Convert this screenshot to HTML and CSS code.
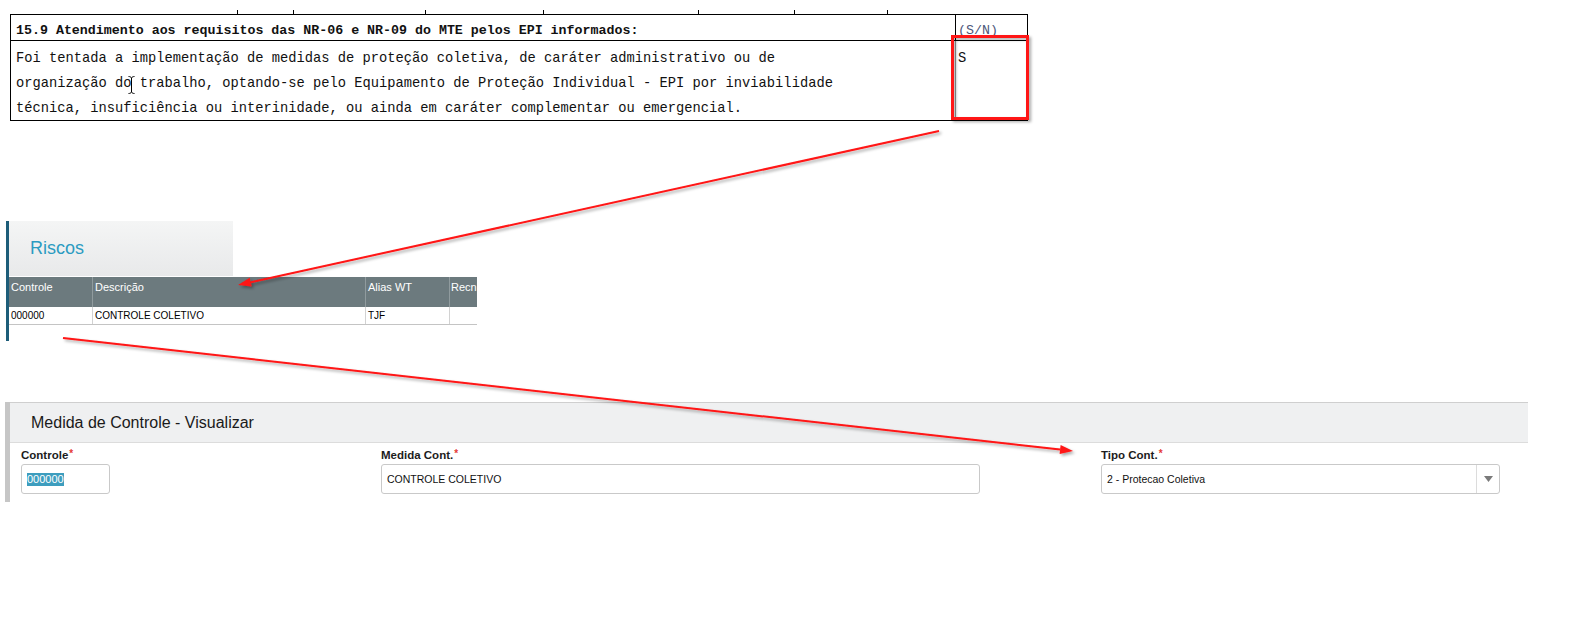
FILE: index.html
```html
<!DOCTYPE html>
<html lang="pt-BR">
<head>
<meta charset="UTF-8">
<title>Medida de Controle</title>
<link rel="stylesheet" href="styles.css">
</head>
<body>
  <div class="doc">
    <div class="ruler">
      <span style="width:228px"></span>
      <span style="width:56px"></span>
      <span style="width:132px"></span>
      <span style="width:118px"></span>
      <span style="width:155px"></span>
      <span style="width:96px"></span>
      <span style="width:93px"></span>
    </div>
    <div class="sheet">
      <div class="sheet-head">
        <div class="cell-text">15.9 Atendimento aos requisitos das NR-06 e NR-09 do MTE pelos EPI informados:</div>
        <div class="cell-sn sn-label">(S/N)</div>
      </div>
      <div class="sheet-body">
        <div class="cell-text">
          Foi tentada a implementação de medidas de proteção coletiva, de caráter administrativo ou de<br>
          organização do trabalho, optando-se pelo Equipamento de Proteção Individual - EPI por inviabilidade<br>
          técnica, insuficiência ou interinidade, ou ainda em caráter complementar ou emergencial.
        </div>
        <div class="cell-sn sn-value">S</div>
      </div>
    </div>
  </div>

  <div class="riscos">
    <div class="riscos-head">Riscos</div>
    <div class="grid">
      <div class="grid-head">
        <div class="col c1">Controle</div>
        <div class="col c2">Descrição</div>
        <div class="col c3">Alias WT</div>
        <div class="col c4">Recn</div>
      </div>
      <div class="grid-row">
        <div class="col c1">000000</div>
        <div class="col c2">CONTROLE COLETIVO</div>
        <div class="col c3">TJF</div>
        <div class="col c4"></div>
      </div>
    </div>
  </div>

  <div class="medida">
    <div class="medida-head">Medida de Controle - Visualizar</div>
    <div class="form">
      <div class="field">
        <label>Controle<span class="req">*</span></label>
        <div class="input input-code"><span class="selected">000000</span></div>
      </div>
      <div class="field">
        <label>Medida Cont.<span class="req">*</span></label>
        <div class="input input-wide">CONTROLE COLETIVO</div>
      </div>
      <div class="field">
        <label>Tipo Cont.<span class="req">*</span></label>
        <div class="input select">
          <span class="select-value">2 - Protecao Coletiva</span>
          <span class="select-btn"><svg width="9" height="6" viewBox="0 0 9 6"><path d="M0 0h9L4.5 6z" fill="#7a7a7a"/></svg></span>
        </div>
      </div>
    </div>
  </div>

  <svg class="marks" width="1573" height="623" viewBox="0 0 1573 623">
    <defs>
      <filter id="shade" x="-10%" y="-10%" width="130%" height="130%">
        <feDropShadow dx="2" dy="2" stdDeviation="1.5" flood-color="#000" flood-opacity="0.35"/>
      </filter>
    </defs>
    <g filter="url(#shade)">
      <rect x="952.5" y="36.5" width="75" height="82" fill="none" stroke="#ff1414" stroke-width="3"/>
      <line x1="939" y1="131" x2="250.7" y2="282.2" stroke="#ff1414" stroke-width="2"/>
      <polygon points="238,285 249.7,277.8 251.7,286.6" fill="#ff1414"/>
      <line x1="63" y1="338" x2="1060.1" y2="449.6" stroke="#ff1414" stroke-width="2"/>
      <polygon points="1073,451 1059.6,454 1060.6,445.1" fill="#ff1414"/>
    </g>
    <path class="ibeam" d="M128.5 76.5c1.5 0 2.5.5 3 1.5c.5-1 1.5-1.5 3-1.5M131.5 78v14M128.5 93.5c1.5 0 2.5-.5 3-1.5c.5 1 1.5 1.5 3 1.5" fill="none" stroke="#000" stroke-width="1"/>
  </svg>
</body>
</html>
```

FILE: styles.css
```css
body {
  margin: 0;
  position: relative;
  background: #fff;
  font-family: "Liberation Sans", Arial, sans-serif;
  color: #111;
}

/* documento (ficha) */
.doc {
  margin: 10px 0 0 10px;
  width: 1018px;
  font-family: "Liberation Mono", "Courier New", monospace;
}
.ruler {
  display: flex;
  height: 4px;
}
.ruler span {
  border-right: 1px solid #000;
  box-sizing: border-box;
}
.sheet {
  border: 1px solid #000;
  border-bottom: none;
}
.sheet-head {
  display: flex;
  height: 25px;
  border-bottom: 1px solid #000;
  font-size: 13.3px;
}
.sheet-head .cell-text {
  font-weight: bold;
  padding-top: 8px;
  line-height: 16px;
}
.cell-text {
  width: 939px;
  padding-left: 5px;
  white-space: nowrap;
}
.cell-sn {
  flex: 1;
  border-left: 1px solid #000;
  padding-left: 2px;
}
.sn-label {
  padding-top: 8px;
  line-height: 16px;
  color: #4d5679;
}
.sheet-body {
  display: flex;
  height: 79px;
  border-bottom: 1px solid #000;
  font-size: 13.75px;
  line-height: 25px;
}
.sheet-body .cell-text {
  padding-top: 5px;
}
.sn-value {
  padding-top: 5px;
  border-left-color: #999;
}

/* Riscos */
.riscos {
  margin: 100px 0 0 6px;
  border-left: 3px solid #1d5d79;
  width: 468px;
  padding-bottom: 16px;
}
.riscos-head {
  width: 203px;
  height: 55px;
  padding-left: 21px;
  display: flex;
  align-items: center;
  background: linear-gradient(#f4f5f5, #e8e9ea);
  color: #2b9bc1;
  font-size: 18px;
}
.grid {
  margin-top: 1px;
  overflow: hidden;
}
.grid-head,
.grid-row {
  display: flex;
}
.grid-head {
  height: 30px;
  background: #6c7a7e;
  color: #fff;
  font-size: 11px;
  line-height: 14px;
}
.grid-head .col {
  padding-top: 3px;
  border-right: 1px solid #909b9e;
}
.grid-row {
  height: 17px;
  border-bottom: 1px solid #c4c4c4;
  font-size: 10px;
  line-height: 17px;
  color: #000;
}
.grid-row .col {
  border-right: 1px solid #d2d2d2;
}
.col {
  box-sizing: border-box;
  padding-left: 2px;
  white-space: nowrap;
  overflow: hidden;
  flex: none;
}
.c1 { width: 84px; }
.c2 { width: 273px; }
.c3 { width: 84px; }
.c4 { width: 27px; padding-left: 1px; border-right: none !important; }

/* Medida de Controle */
.medida {
  margin: 61px 0 0 5px;
  border-left: 5px solid #c6c6c6;
  width: 1518px;
  padding-bottom: 8px;
}
.medida-head {
  height: 39px;
  border-top: 1px solid #cfcfcf;
  border-bottom: 1px solid #dcdcdc;
  background: #eff0f1;
  padding-left: 21px;
  display: flex;
  align-items: center;
  font-size: 16px;
  color: #1a1a1a;
}
.form {
  display: grid;
  grid-template-columns: 360px 720px 1fr;
  padding: 4px 0 0 11px;
}
.field label {
  display: block;
  font-weight: bold;
  font-size: 11.5px;
  line-height: 13px;
  color: #1c1c1c;
  margin-bottom: 2px;
}
.req {
  color: #e53935;
  font-size: 10px;
  vertical-align: 2px;
  margin-left: 1px;
}
.input {
  box-sizing: border-box;
  height: 30px;
  border: 1px solid #c9c9c9;
  border-radius: 3px;
  padding-left: 5px;
  display: flex;
  align-items: center;
  font-size: 10.5px;
  color: #111;
  background: #fff;
}
.input-code {
  width: 89px;
  font-size: 11px;
}
.selected {
  background: #3d9dbe;
  color: #fff;
  line-height: 13px;
}
.input-wide {
  width: 599px;
}
.select {
  width: 399px;
  padding-left: 0;
}
.select-value {
  flex: 1;
  padding-left: 5px;
}
.select-btn {
  width: 22px;
  height: 100%;
  border-left: 1px solid #dcdcdc;
  display: flex;
  align-items: center;
  justify-content: center;
}

.marks {
  position: absolute;
  top: 0;
  left: 0;
  pointer-events: none;
}
```
